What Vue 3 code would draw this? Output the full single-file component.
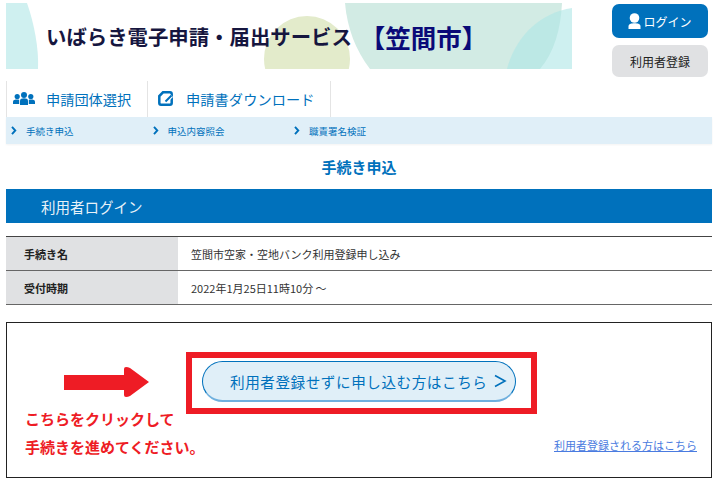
<script setup>
const subnav = ['手続き申込', '申込内容照会', '職責署名検証']
const rows = [
  { k: '手続き名', v: '笠間市空家・空地バンク利用登録申し込み' },
  { k: '受付時期', v: '2022年1月25日11時10分 ～' }
]
</script>

<template>
  <div class="page">
    <header class="top">
      <div class="banner">
        <svg class="banner-bg" width="566" height="66" viewBox="0 0 566 66">
          <path d="M0 0H21C28 20 33 45 32 66H0Z" fill="#cff0f0" />
          <circle cx="301" cy="56" r="43" fill="#e3ebcb" />
          <path d="M339 0H556C555 25 548 50 534 66H364C350 48 341 25 339 0Z" fill="#d2ebe4" />
          <path d="M566 5C535 10 510 32 501 66H566Z" fill="#aee6e6" opacity=".6" />
        </svg>
        <span class="banner-title">いばらき電子申請・届出サービス</span>
        <span class="banner-city">【笠間市】</span>
      </div>
      <div class="auth">
        <a class="btn btn-login">
          <svg width="13" height="16" viewBox="0 0 13 16"><circle cx="6.500" cy="5" r="4.800" fill="#fff" /><path d="M0.500 16V13.500C0.500 11 3 10.300 6.500 10.300S12.500 11 12.500 13.500V16Z" fill="#fff" /></svg>
          <span>ログイン</span>
        </a>
        <a class="btn btn-register">利用者登録</a>
      </div>
    </header>

    <nav class="nav">
      <a class="nav-item first">
        <svg width="22" height="13" viewBox="0 0 22 13" fill="#0071bc">
          <circle cx="4.200" cy="4.500" r="2.600" /><circle cx="11" cy="3" r="3" /><circle cx="17.800" cy="4.500" r="2.600" />
          <path d="M0 12V9.500C0 8 2 7.500 4.200 7.500C5 7.500 5.700 7.600 6.200 7.900V12Z" />
          <path d="M7 13V8.500C7 7 9 6.300 11 6.300S15 7 15 8.500V13Z" />
          <path d="M22 12V9.500C22 8 20 7.500 17.800 7.500C17 7.500 16.300 7.600 15.800 7.900V12Z" />
        </svg>
        <span>申請団体選択</span>
      </a>
      <a class="nav-item second">
        <svg width="15" height="15" viewBox="0 0 15 15">
          <path d="M5 1.300H12C13 1.300 13.700 2 13.700 3V12C13.700 13 13 13.700 12 13.700H3C2 13.700 1.300 13 1.300 12V5Z" fill="none" stroke="#0071bc" stroke-width="2.500" />
          <path d="M7.500 10.500L13.500 4.500" stroke="#fff" stroke-width="4" />
          <path d="M7.500 10.500L13.500 4.500" stroke="#0071bc" stroke-width="2" />
        </svg>
        <span>申請書ダウンロード</span>
      </a>
    </nav>
    <div class="subnav">
      <a v-for="s in subnav" :key="s" class="sub-item">
        <svg width="6" height="9" viewBox="0 0 6 9"><path d="M1 .8L4.300 4.500L1 8.200" fill="none" stroke="#0071bc" stroke-width="1.900" /></svg>
        <span>{{ s }}</span>
      </a>
    </div>

    <h1 class="title">手続き申込</h1>
    <h2 class="bar">利用者ログイン</h2>

    <div class="table">
      <div v-for="r in rows" :key="r.k" class="row">
        <div class="th">{{ r.k }}</div>
        <div class="td">{{ r.v }}</div>
      </div>
    </div>

    <section class="box">
      <div class="left">
        <svg class="arrow" width="85" height="30" viewBox="0 0 85 30">
          <path d="M0 8H60V2Q60 0 62 0Q64 0 66 1L85 15L66 29Q64 30 62 30Q60 30 60 28V23H0Z" fill="#ee1c25" />
        </svg>
        <p class="note">こちらをクリックして<br />手続きを進めてください。</p>
      </div>
      <div class="center">
        <div class="redbox">
          <a class="pill">
            <span>利用者登録せずに申し込む方はこちら</span>
            <svg width="13" height="14" viewBox="0 0 13 14"><path d="M1 1.500L11 7L1 12.500" fill="none" stroke="#0071bc" stroke-width="1.600" /></svg>
          </a>
        </div>
      </div>
      <a class="reg-link">利用者登録される方はこちら</a>
    </section>
  </div>
</template>

<style>
html, body { margin: 0; background: #fff; }
</style>

<style scoped>
.page {
  width: 718px;
  height: 485px;
  padding: 3px 6px 0;
  box-sizing: border-box;
  overflow: hidden;
  font-family: "Noto Sans CJK JP", "Noto Sans", sans-serif;
  color: #222;
}
.top { display: flex; height: 78px; }
.banner {
  position: relative;
  width: 566px;
  height: 66px;
  overflow: hidden;
  display: flex;
  align-items: center;
  padding-left: 40px;
  box-sizing: border-box;
}
.banner-bg { position: absolute; left: 0; top: 0; }
.banner-title {
  position: relative;
  font-size: 20.400px;
  font-weight: 700;
  color: #16163f;
  white-space: nowrap;
}
.banner-city {
  position: relative;
  font-size: 25.500px;
  font-weight: 700;
  color: #0a0a78;
  margin-left: 8px;
  white-space: nowrap;
}
.auth {
  margin-left: 40px;
  padding-top: 1px;
  width: 96px;
  display: flex;
  flex-direction: column;
  gap: 7px;
}
.btn {
  display: flex;
  align-items: center;
  justify-content: center;
  border-radius: 7px;
  font-size: 12px;
}
.btn-login { height: 34px; background: #0071bc; color: #fff; gap: 2px; }
.btn-register { height: 32px; background: #e0e1e3; color: #222; }
.nav { display: flex; height: 36px; }
.nav-item {
  display: flex;
  align-items: center;
  height: 36px;
  box-sizing: border-box;
  border-right: 1px solid #e4e4e4;
  color: #0071bc;
  font-size: 14.200px;
  padding-bottom: 1px;
}
.first { width: 142px; padding-left: 6px; border-left: 1px solid #e4e4e4; gap: 11px; }
.second { width: 183px; padding-left: 10px; gap: 13px; letter-spacing: .1px; }
.subnav {
  height: 27px;
  background: #e0eff8;
  display: flex;
  align-items: center;
  padding-left: 5px;
  box-shadow: 0 1px 2px rgba(0, 0, 0, .05);
}
.sub-item {
  width: 141.500px;
  display: flex;
  align-items: center;
  gap: 9px;
  font-size: 9.500px;
  color: #0071bc;
}
.title {
  margin: 0;
  height: 45px;
  display: flex;
  align-items: center;
  justify-content: center;
  font-size: 15px;
  font-weight: 700;
  color: #0071bc;
}
.bar {
  margin: 0;
  height: 34px;
  display: flex;
  align-items: center;
  padding-left: 35px;
  background: #0071bc;
  color: #e8f2f8;
  font-size: 14.500px;
  font-weight: 400;
}
.table {
  margin-top: 13px;
  border-top: 1px solid #444;
}
.row {
  display: flex;
  height: 34px;
  box-sizing: border-box;
  border-bottom: 1px solid #666;
}
.th {
  width: 172px;
  padding-left: 18px;
  box-sizing: border-box;
  background: #e0e1e3;
  font-size: 11px;
  font-weight: 700;
  display: flex;
  align-items: center;
}
.td {
  padding-left: 13px;
  font-size: 11px;
  display: flex;
  align-items: center;
  color: #333;
}
.box {
  position: relative;
  margin-top: 17px;
  height: 156px;
  box-sizing: border-box;
  border: 1px solid #222;
  display: flex;
}
.left {
  width: 179px;
  padding: 44px 0 0 18px;
  box-sizing: border-box;
}
.arrow { display: block; margin-left: 39px; }
.note {
  margin: 8px 0 0;
  font-size: 15px;
  line-height: 27.500px;
  font-weight: 700;
  color: #ee1c25;
  white-space: nowrap;
}
.center { padding-top: 29px; }
.redbox {
  width: 351px;
  height: 62px;
  box-sizing: border-box;
  border: 6px solid #ee1c25;
  padding: 3px 0 0 10px;
}
.pill {
  width: 314px;
  height: 41px;
  box-sizing: border-box;
  border: 1px solid #0071bc;
  border-bottom: 2px solid #6fb0de;
  border-radius: 21px;
  background: #e0eff8;
  color: #0071bc;
  font-size: 14.600px;
  letter-spacing: .55px;
  display: flex;
  align-items: center;
  gap: 7px;
  padding-left: 27px;
}
.reg-link {
  position: absolute;
  right: 14px;
  bottom: 24px;
  font-size: 11px;
  color: #4a7be0;
  text-decoration: underline;
  white-space: nowrap;
}
</style>
